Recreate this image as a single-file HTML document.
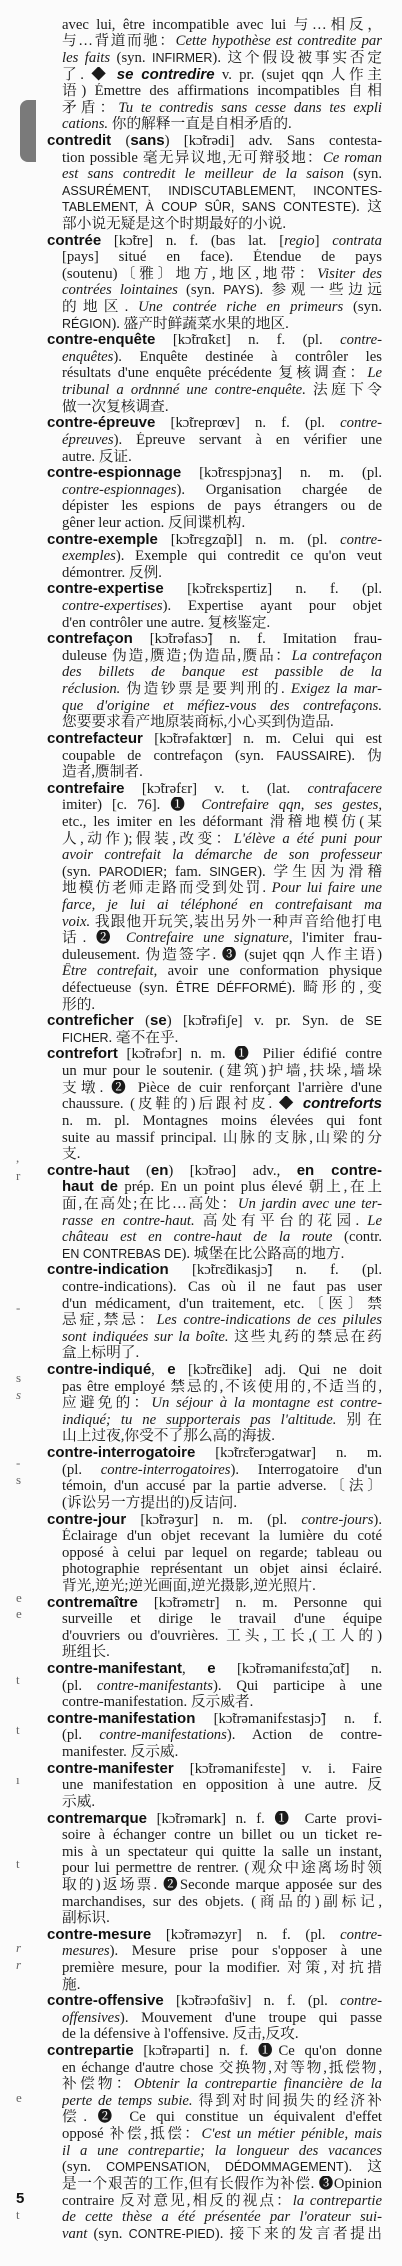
<!DOCTYPE html>
<html><head><meta charset="utf-8"><style>
html,body{margin:0;padding:0;background:#fbfbfb;}
body{width:402px;height:2266px;position:relative;overflow:hidden;color:#1a1a1a;
font-family:"Liberation Serif","Noto Serif CJK SC","Noto Sans CJK SC",serif;font-size:14.7px;}
#w{position:absolute;top:16.7px;left:0;width:402px;}
#w div{height:16.62px;line-height:16.62px;overflow:hidden;text-align:justify;text-align-last:justify;white-space:normal;}
.b{margin-left:62px;width:320px;}
.h{margin-left:47px;width:335px;}
.e{text-align-last:left !important;}
b{font-family:"Liberation Sans",sans-serif;font-weight:bold;font-size:15px;color:#111;}
.c{font-family:"Liberation Sans","Noto Sans CJK SC",sans-serif;font-size:12.5px;}
.tab{position:absolute;left:20px;top:100px;width:16px;height:62px;background:#7a7a7a;border-radius:8px 0 0 8px;}
.m{position:absolute;left:16px;font-size:13px;color:#666;}
</style></head><body>
<div class="tab"></div>
<div class="m" style="top:1150px">,</div><div class="m" style="top:1168px">r</div>
<div class="m" style="top:1300px">-</div><div class="m" style="top:1370px">s</div>
<div class="m" style="top:1387px"><i>s</i></div><div class="m" style="top:1455px">-</div>
<div class="m" style="top:1472px">s</div><div class="m" style="top:1590px">e</div>
<div class="m" style="top:1606px">e</div><div class="m" style="top:1672px">t</div>
<div class="m" style="top:1722px">t</div><div class="m" style="top:1772px">ı</div>
<div class="m" style="top:1856px">t</div><div class="m" style="top:1940px"><i>r</i></div>
<div class="m" style="top:1957px"><i>r</i></div><div class="m" style="top:2090px">e</div>
<div class="m" style="top:2190px"><b>5</b></div><div class="m" style="top:2207px">t</div>
<div id="w">
<div class="b">avec lui, être incompatible avec lui 与…相反，</div>
<div class="b">与…背道而驰：<i>Cette hypothèse est contredite par</i></div>
<div class="b"><i>les faits</i> (syn. <span class="c">INFIRMER</span>). 这个假设被事实否定</div>
<div class="b">了. ◆ <b><i>se contredire</i></b> v. pr. (sujet qqn 人作主</div>
<div class="b">语) Émettre des affirmations incompatibles 自相</div>
<div class="b">矛盾：<i>Tu te contredis sans cesse dans tes expli</i></div>
<div class="b e"><i>cations.</i> 你的解释一直是自相矛盾的.</div>
<div class="h"><b>contredit</b> (<b>sans</b>) [kɔ̃trədi] adv. Sans contesta-</div>
<div class="b">tion possible 毫无异议地,无可辩驳地：<i>Ce roman</i></div>
<div class="b"><i>est sans contredit le meilleur de la saison</i> (syn.</div>
<div class="b"><span class="c">ASSURÉMENT, INDISCUTABLEMENT, INCONTES-</span></div>
<div class="b"><span class="c">TABLEMENT, À COUP SÛR, SANS CONTESTE</span>). 这</div>
<div class="b e">部小说无疑是这个时期最好的小说.</div>
<div class="h"><b>contrée</b> [kɔ̃tre] n. f. (bas lat. [<i>regio</i>] <i>contrata</i></div>
<div class="b">[pays] situé en face). Étendue de pays</div>
<div class="b">(soutenu)〔雅〕地方,地区,地带：<i>Visiter des</i></div>
<div class="b"><i>contrées lointaines</i> (syn. <span class="c">PAYS</span>). 参观一些边远</div>
<div class="b">的地区. <i>Une contrée riche en primeurs</i> (syn.</div>
<div class="b e"><span class="c">RÉGION</span>). 盛产时鲜蔬菜水果的地区.</div>
<div class="h"><b>contre-enquête</b> [kɔ̃trɑ̃kɛt] n. f. (pl. <i>contre-</i></div>
<div class="b"><i>enquêtes</i>). Enquête destinée à contrôler les</div>
<div class="b">résultats d'une enquête précédente 复核调查：<i>Le</i></div>
<div class="b"><i>tribunal a ordnnné une contre-enquête.</i> 法庭下令</div>
<div class="b e">做一次复核调查.</div>
<div class="h"><b>contre-épreuve</b> [kɔ̃treprœv] n. f. (pl. <i>contre-</i></div>
<div class="b"><i>épreuves</i>). Épreuve servant à en vérifier une</div>
<div class="b e">autre. 反证.</div>
<div class="h"><b>contre-espionnage</b> [kɔ̃trɛspjɔnaʒ] n. m. (pl.</div>
<div class="b"><i>contre-espionnages</i>). Organisation chargée de</div>
<div class="b">dépister les espions de pays étrangers ou de</div>
<div class="b e">gêner leur action. 反间谍机构.</div>
<div class="h"><b>contre-exemple</b> [kɔ̃trɛgzɑ̃pl] n. m. (pl. <i>contre-</i></div>
<div class="b"><i>exemples</i>). Exemple qui contredit ce qu'on veut</div>
<div class="b e">démontrer. 反例.</div>
<div class="h"><b>contre-expertise</b> [kɔ̃trɛkspɛrtiz] n. f. (pl.</div>
<div class="b"><i>contre-expertises</i>). Expertise ayant pour objet</div>
<div class="b e">d'en contrôler une autre. 复核鉴定.</div>
<div class="h"><b>contrefaçon</b> [kɔ̃trəfasɔ̃] n. f. Imitation frau-</div>
<div class="b">duleuse 伪造,赝造;伪造品,赝品：<i>La contrefaçon</i></div>
<div class="b"><i>des billets de banque est passible de la</i></div>
<div class="b"><i>réclusion.</i> 伪造钞票是要判刑的. <i>Exigez la mar-</i></div>
<div class="b"><i>que d'origine et méfiez-vous des contrefaçons.</i></div>
<div class="b e">您要要求看产地原装商标,小心买到伪造品.</div>
<div class="h"><b>contrefacteur</b> [kɔ̃trəfaktœr] n. m. Celui qui est</div>
<div class="b">coupable de contrefaçon (syn. <span class="c">FAUSSAIRE</span>). 伪</div>
<div class="b e">造者,赝制者.</div>
<div class="h"><b>contrefaire</b> [kɔ̃trəfɛr] v. t. (lat. <i>contrafacere</i></div>
<div class="b">imiter) [c. 76]. ❶ <i>Contrefaire qqn, ses gestes,</i></div>
<div class="b">etc., les imiter en les déformant 滑稽地模仿(某</div>
<div class="b">人,动作);假装,改变：<i>L'élève a été puni pour</i></div>
<div class="b"><i>avoir contrefait la démarche de son professeur</i></div>
<div class="b">(syn. <span class="c">PARODIER</span>; fam. <span class="c">SINGER</span>). 学生因为滑稽</div>
<div class="b">地模仿老师走路而受到处罚. <i>Pour lui faire une</i></div>
<div class="b"><i>farce, je lui ai téléphoné en contrefaisant ma</i></div>
<div class="b"><i>voix.</i> 我跟他开玩笑,装出另外一种声音给他打电</div>
<div class="b">话. ❷ <i>Contrefaire une signature</i>, l'imiter frau-</div>
<div class="b">duleusement. 伪造签字. ❸ (sujet qqn 人作主语)</div>
<div class="b"><i>Être contrefait</i>, avoir une conformation physique</div>
<div class="b">défectueuse (syn. <span class="c">ÊTRE DÉFFORMÉ</span>). 畸形的,变</div>
<div class="b e">形的.</div>
<div class="h"><b>contreficher</b> (<b>se</b>) [kɔ̃trəfiʃe] v. pr. Syn. de <span class="c">SE</span></div>
<div class="b e"><span class="c">FICHER</span>. 毫不在乎.</div>
<div class="h"><b>contrefort</b> [kɔ̃trəfɔr] n. m. ❶ Pilier édifié contre</div>
<div class="b">un mur pour le soutenir. (建筑)护墙,扶垛,墙垛</div>
<div class="b">支墩. ❷ Pièce de cuir renforçant l'arrière d'une</div>
<div class="b">chaussure. (皮鞋的)后跟衬皮. ◆ <b><i>contreforts</i></b></div>
<div class="b">n. m. pl. Montagnes moins élevées qui font</div>
<div class="b">suite au massif principal. 山脉的支脉,山梁的分</div>
<div class="b e">支.</div>
<div class="h"><b>contre-haut</b> (<b>en</b>) [kɔ̃trəo] adv., <b>en contre-</b></div>
<div class="b"><b>haut de</b> prép. En un point plus élevé 朝上,在上</div>
<div class="b">面,在高处;在比…高处：<i>Un jardin avec une ter-</i></div>
<div class="b"><i>rasse en contre-haut.</i> 高处有平台的花园. <i>Le</i></div>
<div class="b"><i>château est en contre-haut de la route</i> (contr.</div>
<div class="b e"><span class="c">EN CONTREBAS DE</span>). 城堡在比公路高的地方.</div>
<div class="h"><b>contre-indication</b> [kɔ̃trɛ̃dikasjɔ̃] n. f. (pl.</div>
<div class="b">contre-indications). Cas où il ne faut pas user</div>
<div class="b">d'un médicament, d'un traitement, etc.〔医〕禁</div>
<div class="b">忌症,禁忌：<i>Les contre-indications de ces pilules</i></div>
<div class="b"><i>sont indiquées sur la boîte.</i> 这些丸药的禁忌在药</div>
<div class="b e">盒上标明了.</div>
<div class="h"><b>contre-indiqué</b>, <b>e</b> [kɔ̃trɛ̃dike] adj. Qui ne doit</div>
<div class="b">pas être employé 禁忌的,不该使用的,不适当的,</div>
<div class="b">应避免的：<i>Un séjour à la montagne est contre-</i></div>
<div class="b"><i>indiqué; tu ne supporterais pas l'altitude.</i> 别在</div>
<div class="b e">山上过夜,你受不了那么高的海拔.</div>
<div class="h"><b>contre-interrogatoire</b> [kɔ̃trɛ̃terɔgatwar] n. m.</div>
<div class="b">(pl. <i>contre-interrogatoires</i>). Interrogatoire d'un</div>
<div class="b">témoin, d'un accusé par la partie adverse.〔法〕</div>
<div class="b e">(诉讼另一方提出的)反诘问.</div>
<div class="h"><b>contre-jour</b> [kɔ̃trəʒur] n. m. (pl. <i>contre-jours</i>).</div>
<div class="b">Éclairage d'un objet recevant la lumière du coté</div>
<div class="b">opposé à celui par lequel on regarde; tableau ou</div>
<div class="b">photographie représentant un objet ainsi éclairé.</div>
<div class="b e">背光,逆光;逆光画面,逆光摄影,逆光照片.</div>
<div class="h"><b>contremaître</b> [kɔ̃trəmɛtr] n. m. Personne qui</div>
<div class="b">surveille et dirige le travail d'une équipe</div>
<div class="b">d'ouvriers ou d'ouvrières. 工头,工长,(工人的)</div>
<div class="b e">班组长.</div>
<div class="h"><b>contre-manifestant</b>, <b>e</b> [kɔ̃trəmanifɛstɑ̃,ɑ̃t] n.</div>
<div class="b">(pl. <i>contre-manifestants</i>). Qui participe à une</div>
<div class="b e">contre-manifestation. 反示威者.</div>
<div class="h"><b>contre-manifestation</b> [kɔ̃trəmanifɛstasjɔ̃] n. f.</div>
<div class="b">(pl. <i>contre-manifestations</i>). Action de contre-</div>
<div class="b e">manifester. 反示威.</div>
<div class="h"><b>contre-manifester</b> [kɔ̃trəmanifɛste] v. i. Faire</div>
<div class="b">une manifestation en opposition à une autre. 反</div>
<div class="b e">示威.</div>
<div class="h"><b>contremarque</b> [kɔ̃trəmark] n. f. ❶ Carte provi-</div>
<div class="b">soire à échanger contre un billet ou un ticket re-</div>
<div class="b">mis à un spectateur qui quitte la salle un instant,</div>
<div class="b">pour lui permettre de rentrer. (观众中途离场时领</div>
<div class="b">取的)返场票. ❷Seconde marque apposée sur des</div>
<div class="b">marchandises, sur des objets. (商品的)副标记,</div>
<div class="b e">副标识.</div>
<div class="h"><b>contre-mesure</b> [kɔ̃trəməzyr] n. f. (pl. <i>contre-</i></div>
<div class="b"><i>mesures</i>). Mesure prise pour s'opposer à une</div>
<div class="b">première mesure, pour la modifier. 对策,对抗措</div>
<div class="b e">施.</div>
<div class="h"><b>contre-offensive</b> [kɔ̃trəɔfɑ̃siv] n. f. (pl. <i>contre-</i></div>
<div class="b"><i>offensives</i>). Mouvement d'une troupe qui passe</div>
<div class="b e">de la défensive à l'offensive. 反击,反攻.</div>
<div class="h"><b>contrepartie</b> [kɔ̃trəparti] n. f. ❶Ce qu'on donne</div>
<div class="b">en échange d'autre chose 交换物,对等物,抵偿物,</div>
<div class="b">补偿物：<i>Obtenir la contrepartie financière de la</i></div>
<div class="b"><i>perte de temps subie.</i> 得到对时间损失的经济补</div>
<div class="b">偿. ❷ Ce qui constitue un équivalent d'effet</div>
<div class="b">opposé 补偿,抵偿：<i>C'est un métier pénible, mais</i></div>
<div class="b"><i>il a une contrepartie; la longueur des vacances</i></div>
<div class="b">(syn. <span class="c">COMPENSATION, DÉDOMMAGEMENT</span>). 这</div>
<div class="b">是一个艰苦的工作,但有长假作为补偿. ❸Opinion</div>
<div class="b">contraire 反对意见,相反的视点：<i>la contrepartie</i></div>
<div class="b"><i>de cette thèse a été présentée par l'orateur sui-</i></div>
<div class="b"><i>vant</i> (syn. <span class="c">CONTRE-PIED</span>). 接下来的发言者提出</div>
</div>
</body></html>
